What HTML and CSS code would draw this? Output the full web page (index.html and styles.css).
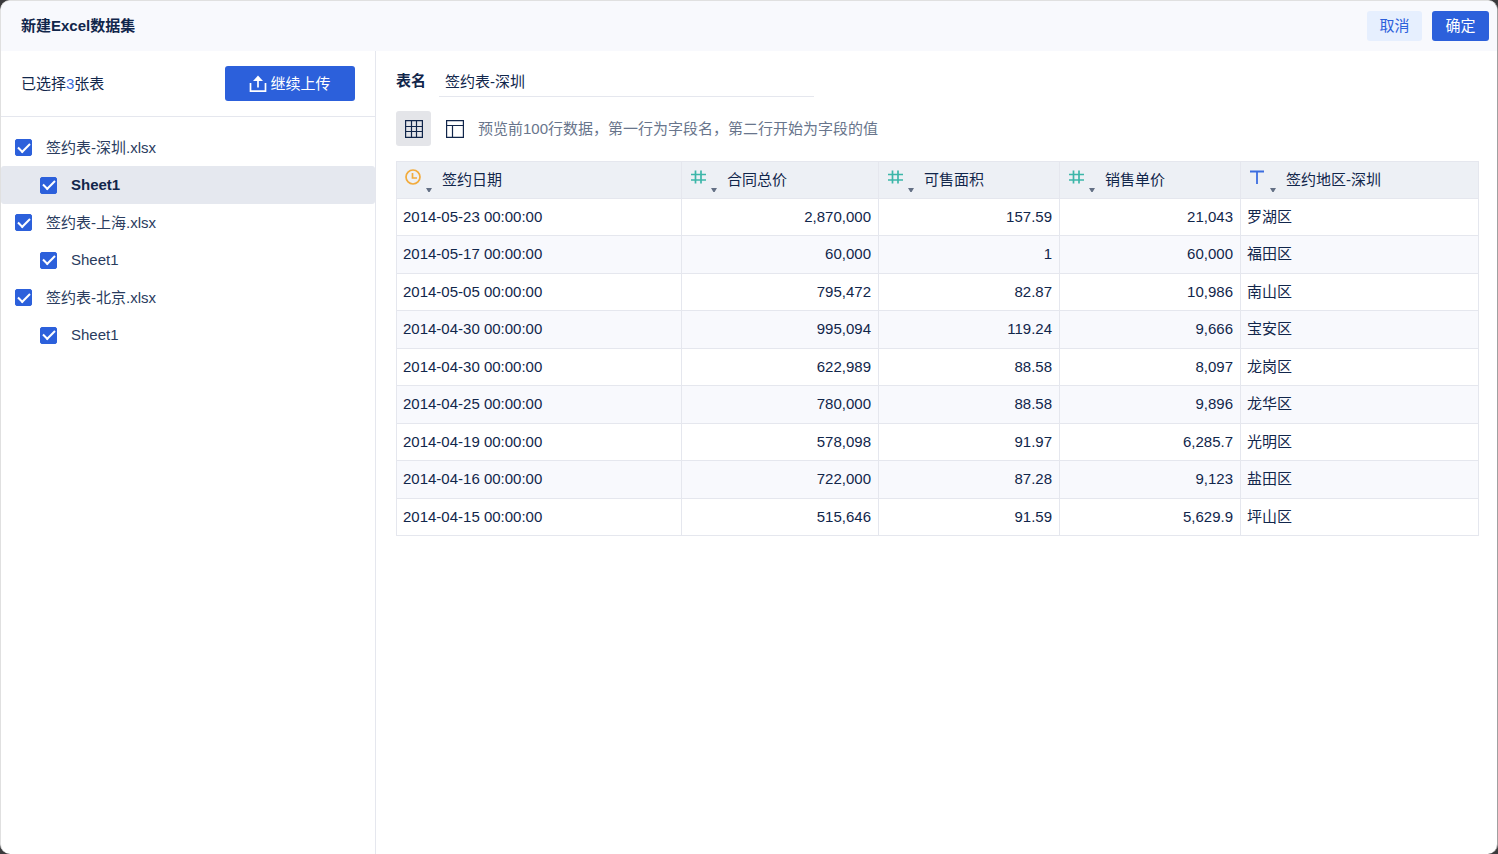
FILE: index.html
```
<!DOCTYPE html>
<html lang="zh-CN">
<head>
  <meta charset="UTF-8">
  <title>新建Excel数据集</title>
  <meta name="viewport" content="width=device-width, initial-scale=1">
  <link rel="stylesheet" href="styles.css">
</head>
<body>

  <!-- Shared icons -->
  <svg class="icon-defs" width="0" height="0" aria-hidden="true">
    <symbol id="icon-number" viewBox="0 0 16 16">
      <path d="M5.5 1.5v13M11 1.5v13M1 5.5h15M1 11h15" fill="none" stroke="#3cb6a9" stroke-width="1.7"/>
    </symbol>
    <symbol id="icon-caret" viewBox="0 0 6 4">
      <path d="M0 0h6L3.6 4H2.4z" fill="#647085"/>
    </symbol>
  </svg>

  <div class="dialog">
    <header class="dialog-header">
      <h1 class="dialog-title">新建Excel数据集</h1>
      <div class="dialog-actions">
        <button type="button" class="btn btn-light">取消</button>
        <button type="button" class="btn btn-primary btn-ok">确定</button>
      </div>
    </header>

    <div class="dialog-body">
      <aside class="sidebar">
        <div class="sidebar-top">
          <span>已选择<span class="count">3</span>张表</span>
          <button type="button" class="btn btn-primary btn-upload">
            <svg width="18" height="18" viewBox="0 0 18 18" fill="none" stroke="#fff" stroke-width="1.7">
              <path d="M1.5 8v8.2h15V8"/>
              <path d="M9 12.5V4"/>
              <path d="M9 .5l5 5.5H4z" fill="#fff" stroke="none"/>
            </svg>
            <span>继续上传</span>
          </button>
        </div>

        <div class="tree">
          <label class="tree-file"><input type="checkbox" class="check" checked>签约表-深圳.xlsx</label>
          <label class="tree-sheet selected"><input type="checkbox" class="check" checked>Sheet1</label>
          <label class="tree-file"><input type="checkbox" class="check" checked>签约表-上海.xlsx</label>
          <label class="tree-sheet"><input type="checkbox" class="check" checked>Sheet1</label>
          <label class="tree-file"><input type="checkbox" class="check" checked>签约表-北京.xlsx</label>
          <label class="tree-sheet"><input type="checkbox" class="check" checked>Sheet1</label>
        </div>
      </aside>

      <main class="main">
        <div class="name-row">
          <label for="tableName" class="name-label">表名</label>
          <input type="text" id="tableName" class="name-input" value="签约表-深圳">
        </div>

        <div class="toolbar">
          <button type="button" class="view-btn active" aria-label="数据预览">
            <svg width="18" height="18" viewBox="0 0 18 18" fill="none" stroke="#11264b" stroke-width="1.2">
              <path d="M.6.6h16.8v16.8H.6zM6.5 0v18M11.5 0v18M0 6.5h18M0 11.5h18"/>
            </svg>
          </button>
          <button type="button" class="view-btn" aria-label="字段设置">
            <svg width="18" height="18" viewBox="0 0 18 18" fill="none" stroke="#11264b" stroke-width="1.2">
              <path d="M.6.6h16.8v16.8H.6zM0 5.5h18M6.5 5v13"/>
            </svg>
          </button>
          <span class="hint">预览前100行数据，第一行为字段名，第二行开始为字段的值</span>
        </div>

        <table class="data-table">
          <colgroup>
            <col class="col-date">
            <col class="col-total">
            <col class="col-num">
            <col class="col-num">
            <col>
          </colgroup>
          <thead>
            <tr>
              <th>
                <div class="field">
                  <button type="button" class="field-type" aria-label="日期类型">
                    <svg width="16" height="16" viewBox="0 0 16 16" fill="none" stroke="#f2ab3c" stroke-width="1.7">
                      <circle cx="8" cy="8" r="7"/>
                      <path d="M7.5 4v5H12"/>
                    </svg>
                    <svg class="caret" width="6" height="4"><use href="#icon-caret"/></svg>
                  </button>
                  <span>签约日期</span>
                </div>
              </th>
              <th>
                <div class="field">
                  <button type="button" class="field-type" aria-label="数值类型">
                    <svg width="16" height="16"><use href="#icon-number"/></svg>
                    <svg class="caret" width="6" height="4"><use href="#icon-caret"/></svg>
                  </button>
                  <span>合同总价</span>
                </div>
              </th>
              <th>
                <div class="field">
                  <button type="button" class="field-type" aria-label="数值类型">
                    <svg width="16" height="16"><use href="#icon-number"/></svg>
                    <svg class="caret" width="6" height="4"><use href="#icon-caret"/></svg>
                  </button>
                  <span>可售面积</span>
                </div>
              </th>
              <th>
                <div class="field">
                  <button type="button" class="field-type" aria-label="数值类型">
                    <svg width="16" height="16"><use href="#icon-number"/></svg>
                    <svg class="caret" width="6" height="4"><use href="#icon-caret"/></svg>
                  </button>
                  <span>销售单价</span>
                </div>
              </th>
              <th>
                <div class="field">
                  <button type="button" class="field-type" aria-label="文本类型">
                    <svg width="16" height="16" viewBox="0 0 16 16" fill="none" stroke="#3b6de0" stroke-width="1.8">
                      <path d="M1 2.5h14M8 2.5v12.5"/>
                    </svg>
                    <svg class="caret" width="6" height="4"><use href="#icon-caret"/></svg>
                  </button>
                  <span>签约地区-深圳</span>
                </div>
              </th>
            </tr>
          </thead>
          <tbody>
            <tr><td>2014-05-23 00:00:00</td><td class="num">2,870,000</td><td class="num">157.59</td><td class="num">21,043</td><td>罗湖区</td></tr>
            <tr><td>2014-05-17 00:00:00</td><td class="num">60,000</td><td class="num">1</td><td class="num">60,000</td><td>福田区</td></tr>
            <tr><td>2014-05-05 00:00:00</td><td class="num">795,472</td><td class="num">82.87</td><td class="num">10,986</td><td>南山区</td></tr>
            <tr><td>2014-04-30 00:00:00</td><td class="num">995,094</td><td class="num">119.24</td><td class="num">9,666</td><td>宝安区</td></tr>
            <tr><td>2014-04-30 00:00:00</td><td class="num">622,989</td><td class="num">88.58</td><td class="num">8,097</td><td>龙岗区</td></tr>
            <tr><td>2014-04-25 00:00:00</td><td class="num">780,000</td><td class="num">88.58</td><td class="num">9,896</td><td>龙华区</td></tr>
            <tr><td>2014-04-19 00:00:00</td><td class="num">578,098</td><td class="num">91.97</td><td class="num">6,285.7</td><td>光明区</td></tr>
            <tr><td>2014-04-16 00:00:00</td><td class="num">722,000</td><td class="num">87.28</td><td class="num">9,123</td><td>盐田区</td></tr>
            <tr><td>2014-04-15 00:00:00</td><td class="num">515,646</td><td class="num">91.59</td><td class="num">5,629.9</td><td>坪山区</td></tr>
          </tbody>
        </table>
      </main>
    </div>
  </div>

</body>
</html>
```
FILE: styles.css
```
* {
  margin: 0;
  padding: 0;
  box-sizing: border-box;
}

html, body {
  height: 100%;
}

body {
  background: #3a3a3c;
  color: #11264b;
  font-family: "Liberation Sans", "Noto Sans CJK SC", sans-serif;
  font-size: 15px;
  line-height: 20px;
}

button, input {
  font: inherit;
  color: inherit;
  border: none;
  background: none;
}

button, label {
  cursor: pointer;
}

.icon-defs {
  position: absolute;
}

.dialog {
  display: flex;
  flex-direction: column;
  min-height: 100%;
  background: #fff;
  border: 1px solid #e0e0e0;
  border-right-color: #a0a0a0;
  border-bottom: none;
  border-radius: 10px;
  overflow: hidden;
}

/* Header */
.dialog-header {
  display: flex;
  align-items: center;
  justify-content: space-between;
  height: 50px;
  padding: 0 8px 0 20px;
  background: #f8f9fd;
}

.dialog-title {
  font-size: 15px;
  font-weight: bold;
}

.dialog-actions {
  display: flex;
  gap: 10px;
}

.btn {
  height: 30px;
  border-radius: 3px;
}

.btn-light {
  width: 55px;
  background: #e6effe;
  color: #2c60db;
}

.btn-primary {
  background: #2c60db;
  color: #fff;
}

.btn-ok {
  width: 57px;
}

.dialog-body {
  display: flex;
  flex: 1;
}

/* Sidebar */
.sidebar {
  width: 375px;
  border-right: 1px solid #e5e7ee;
}

.sidebar-top {
  display: flex;
  align-items: center;
  justify-content: space-between;
  height: 66px;
  padding: 0 20px;
  border-bottom: 1px solid #e5e7ee;
}

.count {
  color: #3b6de0;
}

.btn-upload {
  display: flex;
  align-items: center;
  justify-content: center;
  gap: 3px;
  width: 130px;
  height: 35px;
}

.tree {
  display: flex;
  flex-direction: column;
  padding-top: 12px;
}

.tree-file,
.tree-sheet {
  display: flex;
  align-items: center;
  gap: 14px;
  height: 37px;
  padding-left: 14px;
  color: #2a3c5e;
}

.tree-sheet {
  height: 38px;
  padding-left: 39px;
}

.tree-sheet.selected {
  background: #e5e8ef;
  border-radius: 3px;
  color: #11264b;
  font-weight: bold;
}

.check {
  appearance: none;
  display: grid;
  place-items: center;
  width: 17px;
  height: 17px;
  border: 1px solid #c3c9d5;
  border-radius: 2px;
}

.check:checked {
  background: #2c60db;
  border-color: #2c60db;
}

.check:checked::after {
  content: "";
  box-sizing: border-box;
  width: 12px;
  height: 7px;
  margin-bottom: 3px;
  border: solid #fff;
  border-width: 0 0 2px 2px;
  transform: rotate(-45deg);
}

/* Main panel */
.main {
  flex: 1;
  min-width: 0;
  padding: 14px 18px 20px 20px;
}

.name-row {
  display: flex;
  align-items: center;
  gap: 13px;
}

.name-label {
  font-weight: bold;
}

.name-input {
  width: 375px;
  height: 32px;
  padding: 0 6px;
  border-bottom: 1px solid #e5e7ee;
  outline: none;
}

.toolbar {
  display: flex;
  align-items: center;
  gap: 6px;
  margin: 14px 0 15px;
}

.view-btn {
  display: grid;
  place-items: center;
  width: 35px;
  height: 35px;
  border-radius: 3px;
}

.view-btn.active {
  background: #e4e5e9;
}

.hint {
  color: #68758c;
}

/* Preview table */
.data-table {
  width: 100%;
  table-layout: fixed;
  border-collapse: collapse;
}

.col-date {
  width: 285px;
}

.col-total {
  width: 197px;
}

.col-num {
  width: 181px;
}

.data-table th,
.data-table td {
  height: 37px;
  border: 1px solid #e5e7ee;
  text-align: left;
}

.data-table th {
  background: #edf0f5;
  font-weight: normal;
}

.data-table td {
  padding: 0 6px;
}

.data-table .num {
  padding-right: 7px;
  text-align: right;
}

.data-table tbody tr:nth-child(even) {
  background: #f8f9fd;
}

.data-table tbody tr:nth-child(even) td {
  height: 38px;
  padding-bottom: 2px;
}

.field {
  display: flex;
  align-items: center;
  gap: 10px;
}

.field-type {
  display: flex;
  gap: 5px;
  height: 23px;
  padding-left: 8px;
}

.caret {
  align-self: flex-end;
}
```
